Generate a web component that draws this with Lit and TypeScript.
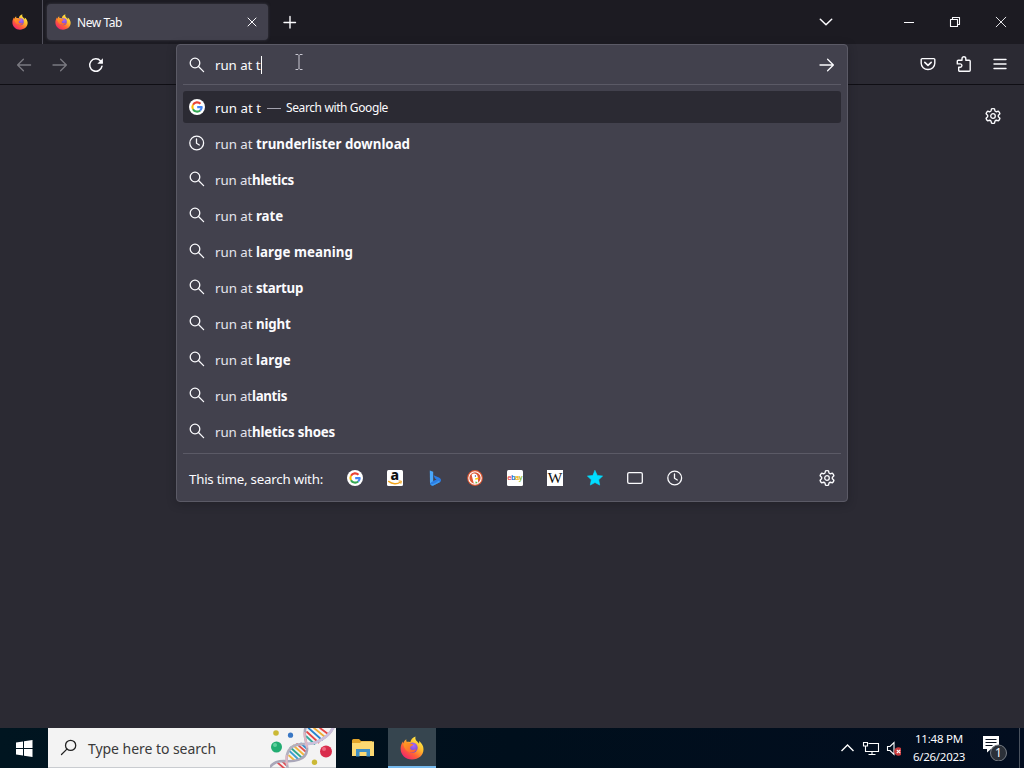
import { LitElement, html, css, svg, nothing } from "lit";
import { customElement, property } from "lit/decorators.js";

/** Text run tracked in or out so that it occupies exactly `w` pixels. */
@customElement("fit-text")
class FitText extends LitElement {
  @property({ type: Number }) w = 0;
  @property() text = "";
  static styles = css`
    :host { display: inline-block; white-space: pre; flex: none; }
    span { display: inline-block; }
  `;
  render() { return html`<span>${this.text}</span>`; }
  updated() {
    const s = this.renderRoot.querySelector("span") as HTMLElement;
    s.style.letterSpacing = "0";
    const natural = s.getBoundingClientRect().width;
    s.style.letterSpacing = `${(this.w - natural) / this.text.length}px`;
    this.style.width = `${this.w}px`;
  }
}

const gearPath = (() => {
  const pts: string[] = [];
  for (let i = 0; i < 6; i++) {
    const a = (i * 60 - 90) * Math.PI / 180;
    const p = (r: number, d: number) => {
      const t = a + d * Math.PI / 180;
      return `${(8 + r * Math.cos(t)).toFixed(2)} ${(8 + r * Math.sin(t)).toFixed(2)}`;
    };
    pts.push(`${i ? "L" : "M"}${p(5.5, -21)}L${p(7.25, -12)}Q${p(7.6, 0)} ${p(7.25, 12)}L${p(5.5, 21)}Q${p(5, 30)} ${p(5.5, 39)}`);
  }
  return pts.join("") + "Z";
})();

const shapes: Record<string, unknown> = {
  search: svg`<circle cx="6" cy="6" r="4.8"/><path d="M9.5 9.5L14.6 14.600"/>`,
  clock: svg`<circle cx="7.700" cy="8" r="6.900"/><path d="M7.500 4V8.300L10.300 10"/>`,
  back: svg`<path d="M14.600 8H1.600M7.400 2.200L1.600 8l5.800 5.800"/>`,
  fwd: svg`<path d="M1 8h13.400M8.600 2.200L14.400 8l-5.800 5.800"/>`,
  reload: svg`<path d="M14 9.200A6.200 6.200 0 1 1 12.600 4L14 5.400" stroke-width="1.500"/><path d="M14.900 1.200v5.600H9.300z" fill="currentColor" stroke="none"/>`,
  pocket: svg`<path d="M2.200 2.600h11.600a1 1 0 0 1 1 1v3.600a6.800 6.300 0 0 1-13.600 0V3.600a1 1 0 0 1 1-1z" stroke-width="1.400"/><path d="M4.800 6.400L8 9.400l3.200-3" stroke-width="1.600"/>`,
  puzzle: svg`<path d="M6 4.300V2.700a1.900 1.900 0 0 1 3.800 0v1.600h3.400a1 1 0 0 1 1 1v8.900a1 1 0 0 1-1 1H3.700a1 1 0 0 1-1-1v-2.900h1.500a1.700 1.700 0 0 0 0-3.400H1.300V5.300a1 1 0 0 1 1-1z" stroke-width="1.400"/>`,
  menu: svg`<path d="M2 3.500h12M2 8h12M2 12.500h12" stroke-width="1.400"/>`,
  gear: svg`<path d=${gearPath} stroke-width="1.350"/><circle cx="8" cy="8" r="2.300"/>`,
  close: svg`<path d="M4 4l8 8M12 4l-8 8" stroke-width="1"/>`,
  plus: svg`<path d="M8 2.500v11.500M2 8.500h11.500" stroke-width="1.400"/>`,
  chevron: svg`<path d="M2.300 5.200L8 10.800l5.700-5.600" stroke-width="1.500"/>`,
  min: svg`<path d="M3 8.500h10" stroke-width="1" stroke-linecap="butt"/>`,
  restore: svg`<path d="M3.500 5.500h7v7h-7zM5.500 5.500v-2h7v7h-2" stroke-width="1.100"/>`,
  winclose: svg`<path d="M3.200 3.200l9.600 9.600M12.800 3.200l-9.600 9.600" stroke-width=".9"/>`,
  tabs: svg`<rect x=".7" y="2.600" width="14.600" height="10.800" rx="1.400"/>`,
  star: svg`<path d="M8 .6l2.300 4.800 5.300.7-3.900 3.700 1 5.300L8 12.500l-4.700 2.600 1-5.300L.4 6.100l5.300-.7z" fill="#00ddff" stroke="#00ddff" stroke-width=".6"/>`,
  google: svg`<circle cx="8" cy="8" r="8" fill="#fff" stroke="none"/>
    <g stroke-width="2.100" stroke-linecap="butt"><path d="M4 5.800A4.700 4.700 0 0 1 11.500 4.800" stroke="#ea4335"/><path d="M4 5.700a4.700 4.700 0 0 0 0 4.600" stroke="#fbbc05"/><path d="M4 10.200a4.700 4.700 0 0 0 7.200 1.300" stroke="#34a853"/><path d="M11.200 11.500A4.600 4.600 0 0 0 12.700 8.100H8.200" stroke="#4285f4"/></g>`,
  amazon: svg`<rect width="16" height="16" rx="1.500" fill="#fff" stroke="none"/><text x="7.800" y="10" text-anchor="middle" font-family="Noto Sans" font-weight="800" font-size="14" fill="#111" stroke="none">a</text><path d="M1.600 11.400c3.800 3 8.600 3 11.600.9" stroke="#f3a51c" stroke-width="1.400"/><path d="M12 11l2.400.1-.5 2.300" stroke="#f3a51c" stroke-width="1"/>`,
  bing: svg`<path d="M2.800.4l3.400 1.400v9.600L3 14z" fill="#4aa8fa" stroke="none"/><path d="M3 13.600l3.600-2.800 3-1.200-1.700-1L6.600 5.200l5.800 2.600c1.900.9 2.100 3.100.8 4.300l-6.800 3.500C4.500 16 3 14.800 3 13.600z" fill="#2b7de6" stroke="none"/><path d="M3.500 14.300c2 .4 5.500-1.400 8-3.600l1.600 1.200-6.700 3.700c-1.200.5-2.300-.3-2.900-1.300z" fill="#3d9df2" stroke="none"/>`,
  duck: svg`<circle cx="8" cy="8" r="7.900" fill="#de5833" stroke="none"/><circle cx="8" cy="8" r="6.200" stroke="#fff" stroke-width="1.100"/><path d="M4.600 4.800c2-2.300 5.600-1.200 6.100 1.700l.5 6c-1 1.400-3.200 1.600-4.400 1.100L5.400 8z" fill="#fff" stroke="none"/><circle cx="8.400" cy="6" r=".7" fill="#2d4f8e" stroke="none"/><path d="M8.200 8.200l3.600-.7-.8 1.700-2.800.5z" fill="#fdd20a" stroke="none"/><path d="M8.400 11.600l2 .5-.3 1.100-1.600.1z" fill="#65bc46" stroke="none"/>`,
  ebay: svg`<rect width="16" height="16" rx="1.500" fill="#fff" stroke="none"/><g font-family="Liberation Sans" font-size="7.400" stroke-width=".2"><text x=".6" y="10.300" fill="#e53238" stroke="#e53238">e</text><text x="4.200" y="10.300" fill="#0064d2" stroke="#0064d2">b</text><text x="7.900" y="10.300" fill="#f5af02" stroke="#f5af02">a</text><text x="11.700" y="10.300" fill="#86b817" stroke="#86b817">y</text></g>`,
  wiki: svg`<rect width="16" height="16" fill="#fff" stroke="none"/><text x="8" y="12.800" text-anchor="middle" font-family="Liberation Serif" font-size="14.500" textLength="14.600" lengthAdjust="spacingAndGlyphs" fill="#111" stroke="none">W</text>`,
};

const icon = (name: string, cls = "") => html`<svg class="ico ${cls}" viewBox="0 0 16 16">${shapes[name]}</svg>`;

const firefox = (cls = "") => html`<svg class="fox ${cls}" viewBox="0 0 24 24">
  <defs>
    <linearGradient id="fl" x1=".85" y1=".1" x2=".2" y2=".95"><stop offset="0" stop-color="#fff04a"/><stop offset=".35" stop-color="#ffb92c"/><stop offset=".66" stop-color="#ff6136"/><stop offset="1" stop-color="#f0246e"/></linearGradient>
    <radialGradient id="gl" cx=".6" cy=".3" r=".8"><stop offset="0" stop-color="#a868fa"/><stop offset="1" stop-color="#6440c4"/></radialGradient>
    <linearGradient id="in" x1="0" y1="0" x2="1" y2="1"><stop offset="0" stop-color="#ffa01e"/><stop offset="1" stop-color="#ff5838"/></linearGradient>
  </defs>
  <path d="M15.500.5c-.6 2.200.2 3.700 1.700 5 .9.800 1.500 1.500 1.800 2.200.3-.7.300-1.700 0-2.600 2.800 2 4.500 5.100 4.500 8.100C23.500 19.200 18.500 23.500 12 23.500S.6 18.700.6 12.700C.6 9.700 1.500 7.200 3 5.400c0 .8.100 1.300.4 1.800C4 5.300 5 4 6.300 3.300c-.2 1 0 2 .5 2.700 1.200-.3 2.400-.1 3.500.2C10.700 3.700 12.500 1.600 15.500.5z" fill="url(#fl)"/>
  <circle cx="12.500" cy="11.600" r="5.200" fill="url(#gl)"/>
  <path d="M3.400 8C5.400 6 8.600 6 10.600 7.400c1 .5 2.300.5 2.900.9-.2 1-1.600 1.600-2.900 2.100-1 1.500-.4 3.300 1.600 3.500 1.700.2 2.700-.8 4-.3-.8 2.200-3 3.200-5.200 2.900C6.500 16 4 12.500 3.400 8z" fill="url(#in)"/>
</svg>`;

const dna = html`<svg class="dna" viewBox="0 0 66 40">
  <g fill="none" stroke-linecap="round">
    <g stroke-width="1.800">
      <path d="M19.500 23l8.500 8" stroke="#3c9fd0"/><path d="M20.500 19.500l11 10" stroke="#2fa98b"/><path d="M23.500 17.500l10.500 9.500" stroke="#f2b63c"/><path d="M27 16l8.500 7.500" stroke="#e05050"/><path d="M31 15.500l5 4.500" stroke="#3386cd"/><path d="M19 27.500l5 4.500" stroke="#f2b63c"/>
      <path d="M36.500 8.500l8 7.500" stroke="#32a99c"/><path d="M37 4l11.500 10.500" stroke="#e64545"/><path d="M38.500 0l13.500 12" stroke="#2683cd"/><path d="M44 0l11 9" stroke="#eead35"/><path d="M50 0l8 6" stroke="#e64545"/>
      <path d="M8 35l7 6M12 33l4 4" stroke="#df4b52"/>
    </g>
    <path d="M-1 40C4 34 8 33 14 33c10 1 22-1 23-11 1-6-5-14-1-24" stroke="#a9a7b9" stroke-width="2.600"/>
    <path d="M18 42c-1-5-2-9-1-15 2-9 9-11.500 18-11C45 16.500 59 10 64-2" stroke="#b3b0be" stroke-width="2.600"/>
    <path d="M36 16C45 16.500 59 10 64-2" stroke="#cbc0dc" stroke-width="2.600"/>
    <path d="M37 19c0-5-3-9-2.500-14M17 36c-.6-3-.6-5-.4-8" stroke="#e0b6c3" stroke-width="2"/>
  </g>
  <circle cx="6.500" cy="19" r="5.500" fill="#22ad72"/><circle cx="5" cy="17" r="2" fill="#5ed09d"/>
  <circle cx="6" cy="5" r="2.800" fill="#cbb936"/><circle cx="20.500" cy="7.200" r="2.600" fill="#3977c4"/>
  <circle cx="56" cy="23.500" r="6" fill="#d92c4c"/><circle cx="54" cy="21" r="2" fill="#ee6880"/><circle cx="44.500" cy="34.300" r="2.700" fill="#cbb936"/>
</svg>`;

type Run = [string, number];
const rows: { icon: string; plain: Run; bold: Run }[] = [
  { icon: "clock", plain: ["run at ", 41], bold: ["trunderlister download", 154] },
  { icon: "search", plain: ["run at", 37], bold: ["hletics", 42] },
  { icon: "search", plain: ["run at ", 41], bold: ["rate", 27] },
  { icon: "search", plain: ["run at ", 41], bold: ["large meaning", 97] },
  { icon: "search", plain: ["run at ", 41], bold: ["startup", 47] },
  { icon: "search", plain: ["run at ", 41], bold: ["night", 34.500] },
  { icon: "search", plain: ["run at ", 41], bold: ["large", 35] },
  { icon: "search", plain: ["run at", 37], bold: ["lantis", 35] },
  { icon: "search", plain: ["run at", 37], bold: ["hletics shoes", 83] },
];
const engines = ["google", "amazon", "bing", "duck", "ebay", "wiki", "star", "tabs", "clock"];

const t = (text: string, w: number, cls = "") => html`<fit-text class=${cls || nothing} .text=${text} .w=${w}></fit-text>`;

@customElement("app-root")
class AppRoot extends LitElement {
  static styles = css`
    :host { display: flex; flex-direction: column; position: relative; width: 1024px; height: 768px; overflow: hidden; background: #2b2a33; color: #fbfbfe; font: 13.300px/20px "Noto Sans", "Open Sans", sans-serif; box-sizing: border-box; }
    * { box-sizing: border-box; }
    svg { display: block; flex: none; }
    .ico { width: 16px; height: 16px; overflow: visible; fill: none; stroke: currentColor; stroke-width: 1.300; stroke-linecap: round; stroke-linejoin: round; }
    .fox { width: 16px; height: 16px; }
    .tabbar { height: 44px; background: #1c1b22; display: flex; align-items: center; }
    .pinned { width: 43px; height: 44px; padding-left: 12px; border-right: 1px solid #504f5a; display: flex; align-items: center; }
    .tab { margin-left: 4px; width: 221px; height: 36px; border-radius: 4px; background: #42414d; box-shadow: 0 0 3px #5b5b6690; display: flex; align-items: center; padding: 0 8px; gap: 6px; font-size: 12px; }
    .tab fit-text { padding-top: 2px; }
    .tab .end { margin-left: auto; }
    .newtab { margin-left: 14px; }
    .winctl { margin-left: auto; display: flex; align-items: center; padding-right: 15px; }
    .winctl .chev { margin-right: 67px; }
    .winctl .mid { margin: 0 30px; }
    .toolbar { height: 41px; border-bottom: 1px solid #0f0e14; display: flex; align-items: center; padding: 1px 16px 0; gap: 20px; }
    .dim { opacity: .38; }
    .right { margin-left: auto; display: flex; gap: 20px; padding-bottom: 1px; }
    .page { flex: 1; display: flex; justify-content: flex-end; align-items: flex-start; padding: 23px 23px 0 0; }
    .popup { position: absolute; left: 176px; top: 44px; width: 672px; height: 458px; background: #42414d; border: 1px solid #5b5a66; border-radius: 4px; display: flex; flex-direction: column; padding: 0 6px; box-shadow: 0 2px 8px #15141a60; }
    .field { height: 40px; border-bottom: 1px solid #5b5a66; display: flex; align-items: center; padding: 0 6px; }
    .field fit-text { margin-left: 10px; }
    .field .go { margin-left: auto; }
    .caret { width: 1px; height: 18px; background: #fff; }
    .list { padding-top: 6px; display: flex; flex-direction: column; gap: 4px; }
    .row { height: 32px; display: flex; align-items: center; padding: 0 6px; border-radius: 3px; }
    .row > .ico { margin-right: 10px; }
    .row.active { background: #2b2a33; }
    .row .plain { color: #e6e5ee; }
    .row fit-text { padding-top: 2px; }
    .dash { width: 14px; height: 1px; background: #a3a2ae; margin: 2px 5px 0 6px; }
    .small { font-size: 12px; }
    .bold { font-weight: 700; }
    .foot { margin-top: auto; height: 48px; border-top: 1px solid #5b5a66; display: flex; align-items: center; padding: 0 6px; }
    .foot fit-text { margin-right: 24px; padding-top: 2px; }
    .engines { display: flex; gap: 24px; }
    .foot .end { margin-left: auto; }
    .pointer { position: absolute; left: 294px; top: 54px; width: 10px; height: 17px; fill: none; stroke: #c9c8d2; stroke-width: 1; }
    .taskbar { height: 40px; background: linear-gradient(90deg, #001520, #000f1c 50%, #020d1f); display: flex; align-items: stretch; }
    .start { width: 48px; display: flex; align-items: center; justify-content: center; }
    .start svg { width: 17px; height: 17px; }
    .find { width: 288px; background: #f3f3f3; border: 1px solid #c9ccd0; border-width: 0 0 1px 0; color: #3a3a3a; display: flex; align-items: center; font-size: 14px; }
    .find fit-text { padding-top: 2px; }
    .find .lens { width: 17px; height: 17px; margin: 0 11px 0 12px; color: #222; transform: scaleX(-1); stroke-width: 1.200; }
    .dna { width: 66px; height: 40px; margin-left: auto; }
    .app { width: 48px; display: flex; align-items: center; justify-content: center; }
    .app.first { margin: 0 1px 0 3px; }
    .app.on { background: #36454f; border-bottom: 2px solid #76b9ed; padding-top: 1px; }
    .fox.big { width: 24px; height: 24px; }
    .tray { margin-left: auto; display: flex; align-items: center; }
    .clock { width: 52px; margin: 0 17px 0 12px; display: flex; flex-direction: column; align-items: center; font-size: 11.500px; line-height: 18px; }
    .edge { width: 1px; align-self: stretch; background: #4a525e; margin: 0 4px 0 11px; }
  `;

  render() {
    return html`
      <div class="tabbar">
        <div class="pinned">${firefox()}</div>
        <div class="tab">${firefox()}${t("New Tab", 45)}<span class="end">${icon("close")}</span></div>
        <div class="newtab">${icon("plus")}</div>
        <div class="winctl">${icon("chevron", "chev")}${icon("min")}${icon("restore", "mid")}${icon("winclose")}</div>
      </div>
      <div class="toolbar">
        ${icon("back", "dim")}${icon("fwd", "dim")}${icon("reload")}
        <div class="right">${icon("pocket")}${icon("puzzle")}${icon("menu")}</div>
      </div>
      <div class="page">${icon("gear")}</div>

      <div class="popup">
        <div class="field">${icon("search")}${t("run at t", 45.500)}<i class="caret"></i>${icon("fwd", "go")}</div>
        <div class="list">
          <div class="row active">${icon("google")}${t("run at t", 46)}<i class="dash"></i>${t("Search with Google", 102, "small")}</div>
          ${rows.map(r => html`<div class="row">${icon(r.icon)}${t(r.plain[0], r.plain[1], "plain")}${t(r.bold[0], r.bold[1], "bold")}</div>`)}
        </div>
        <div class="foot">${t("This time, search with:", 134)}
          <div class="engines">${engines.map(e => icon(e))}</div>
          <span class="end">${icon("gear")}</span>
        </div>
      </div>
      <svg class="pointer" viewBox="0 0 10 17"><path d="M1.500.5h2.500l1 1 1-1h2.500M1.500 15.500h2.500l1-1 1 1h2.500M5 1.500v13"/></svg>

      <div class="taskbar">
        <div class="start"><svg viewBox="0 0 17 17" fill="#fff"><path d="M0 2.400L7 1.400V8H0zM8 1.300L16.500 0v8H8zM0 9h7v6.600l-7-1zM8 9h8.500v8L8 15.700z"/></svg></div>
        <div class="find">${icon("search", "lens")}${t("Type here to search", 128)}${dna}</div>
        <div class="app first"><svg width="22" height="18" viewBox="0 0 22 18"><path d="M0 1.500Q0 0 1.500 0H7l2 2h11v3H0z" fill="#e2a52b"/><path d="M0 4h8l1.500-1.500H22V17H0z" fill="#fcd972"/><path d="M4 17.500V10h14v7.500h-3.500V13h-7v4.500z" fill="#3f8fc4"/></svg></div>
        <div class="app on">${firefox("big")}</div>
        <div class="tray">
          <svg width="60" height="20" viewBox="0 0 60 20" fill="none" stroke="#fff" stroke-width="1.100"><path d="M.5 13L6.500 7l6 6" stroke-width="1.400"/><path d="M27.500 5.500h10v8H24.500v-5M31 13.500v3M27.500 16.500h7M22.500 4.500h4v3.500h-4zM24.500 8v2"/><path d="M46.500 8.500h2.500l4-4v12l-4-4h-2.500z"/><circle cx="57.500" cy="13.500" r="4.300" fill="#c9393c" stroke="none"/><path d="M55.800 11.800l3.400 3.400M59.200 11.800l-3.400 3.400"/></svg>
          <div class="clock">${t("11:48 PM", 48)}${t("6/26/2023", 52)}</div>
          <svg width="26" height="26" viewBox="0 0 26 26"><path d="M1 1h16v13H9l-4 3.500V14H1z" fill="#fff"/><path d="M3.500 4.500h11M3.500 7.500h11M3.500 10.500h7" stroke="#0a1220"/><circle cx="16.500" cy="18" r="8" fill="#2b3038" stroke="#777d85"/><text x="16.500" y="22.200" text-anchor="middle" font-family="Noto Sans" font-size="12" fill="#fff">1</text></svg>
          <i class="edge"></i>
        </div>
      </div>`;
  }
}
